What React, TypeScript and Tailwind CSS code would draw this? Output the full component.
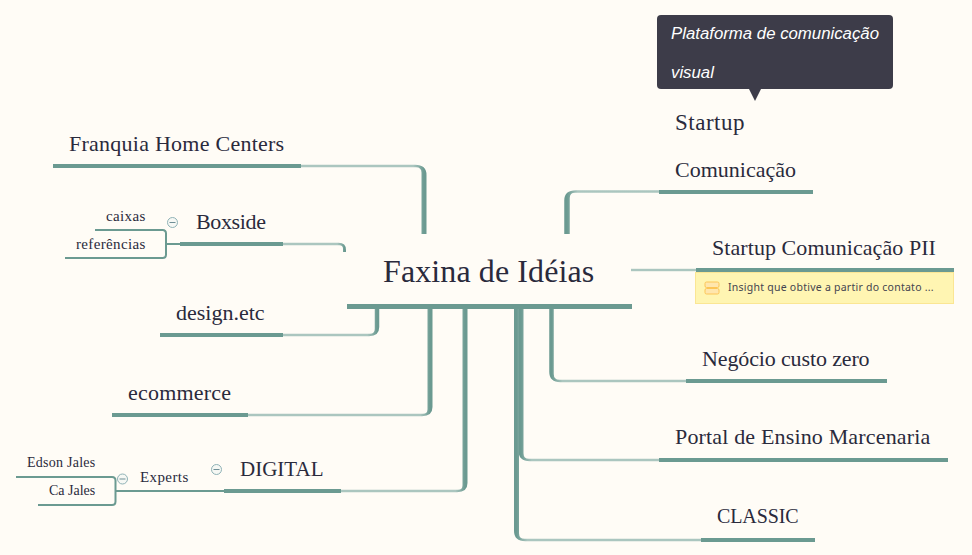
import React from 'react';

const teal = '#6b9a91';
const tealLight = '#abc6bf';

interface Elbow {
  id: string;
  xa: number;
  y: number;
  xb: number;
  yb: number;
  w: number;
  r: number;
}

// tapered branch: thin and light along the topic, thick and dark going into the root
const elbows: Elbow[] = [
  { id: 'franquia', xa: 301, y: 166, xb: 424, yb: 234, w: 5, r: 9 },
  { id: 'boxside', xa: 283, y: 244, xb: 344.5, yb: 252, w: 3, r: 6 },
  { id: 'design', xa: 283, y: 335, xb: 377, yb: 306, w: 4.5, r: 8 },
  { id: 'ecommerce', xa: 248, y: 415, xb: 430, yb: 306, w: 5, r: 8 },
  { id: 'digital', xa: 341, y: 491, xb: 465, yb: 306, w: 5, r: 8 },
  { id: 'comunicacao', xa: 659, y: 191.5, xb: 567, yb: 234, w: 5.5, r: 9 },
  { id: 'negocio', xa: 686, y: 381, xb: 551.5, yb: 306, w: 4.5, r: 9 },
  { id: 'portal', xa: 659, y: 460, xb: 521, yb: 306, w: 5, r: 9 },
  { id: 'classic', xa: 701, y: 540, xb: 516.5, yb: 306, w: 5, r: 9 },
];

function elbowPath({ xa, y, xb, yb, w, r }: Elbow) {
  const dx = xb > xa ? 1 : -1;
  const dy = yb > y ? 1 : -1;
  const t = 1.15;
  const h = w / 2;
  const ir = Math.max(r - h - 1, 1);
  return [
    `M${xa} ${y - dy * t}`,
    `L${xb - dx * r} ${y - dy * t}`,
    `Q${xb + dx * h} ${y - dy * t} ${xb + dx * h} ${y + dy * r}`,
    `L${xb + dx * h} ${yb}`,
    `L${xb - dx * h} ${yb}`,
    `L${xb - dx * h} ${y + dy * (t + ir)}`,
    `Q${xb - dx * h} ${y + dy * t} ${xb - dx * (h + ir)} ${y + dy * t}`,
    `L${xa} ${y + dy * t}`,
    'Z',
  ].join(' ');
}

function Connectors() {
  return (
    <svg className="absolute left-0 top-0" width="972" height="555" viewBox="0 0 972 555" fill="none">
      <defs>
        {elbows.map((e) => (
          <linearGradient key={e.id} id={e.id} gradientUnits="userSpaceOnUse" x1={e.xa} y1="0" x2={e.xb} y2="0">
            <stop offset="0" stopColor={tealLight} />
            <stop offset={1 - (e.r * 1.2) / Math.abs(e.xb - e.xa)} stopColor={tealLight} />
            <stop offset="1" stopColor={teal} />
          </linearGradient>
        ))}
      </defs>
      {elbows.map((e) => (
        <path key={e.id} d={elbowPath(e)} fill={`url(#${e.id})`} />
      ))}
      {/* straight branch to Startup Comunicação PII */}
      <rect x="631" y="268.8" width="65" height="2.4" fill={tealLight} />

      {/* sub topic brackets */}
      <path d="M95 230 H162.5 Q166 230 166 233.5 V254.5 Q166 258 162.5 258 H65" stroke={teal} strokeWidth="2" />
      <path d="M166 244 H181" stroke={teal} strokeWidth="2" />
      <path d="M16 477 H112 Q115.5 477 115.5 480.5 V501.5 Q115.5 505 112 505 H38" stroke={teal} strokeWidth="2" />
      <path d="M115.5 491 H225" stroke={teal} strokeWidth="2" />

      {/* collapse buttons */}
      {[
        [172.5, 222.5],
        [122.5, 479],
        [216.5, 469.5],
      ].map(([cx, cy]) => (
        <g key={cx} stroke="#8fb2b6" strokeWidth="1">
          <circle cx={cx} cy={cy} r="5" fill="#f6f8f4" />
          <path d={`M${cx - 3} ${cy} H${cx + 3}`} stroke="#6f8f96" />
        </g>
      ))}
    </svg>
  );
}

function Topic({ className, children }: { className: string; children: React.ReactNode }) {
  return (
    <div className={`absolute border-b-4 border-[#6b9a91] pb-[5px] whitespace-nowrap leading-[30px] ${className}`}>
      {children}
    </div>
  );
}

function SubTopic({ className, children }: { className: string; children: React.ReactNode }) {
  return <div className={`absolute whitespace-nowrap leading-[20px] ${className}`}>{children}</div>;
}

export default function App() {
  return (
    <div className="relative h-[555px] w-[972px] overflow-hidden bg-[#fffcf6] font-['Liberation_Serif',serif] text-[#2a2a3c]">
      <Connectors />

      <div className="absolute left-[347px] top-[251px] w-[285px] border-b-[5px] border-[#6b9a91] pb-[13px] pl-[36px] text-[32px] leading-[40px] tracking-[0.1px]">
        Faxina de Idéias
      </div>

      <Topic className="left-[53px] top-[129px] w-[248px] pl-[16px] text-[22px] tracking-[0.25px]">Franquia Home Centers</Topic>
      <Topic className="left-[180px] top-[207px] w-[103px] pl-[16px] text-[22px] tracking-[-0.35px]">Boxside</Topic>
      <Topic className="left-[160px] top-[298px] w-[123px] pl-[16px] text-[22px]">design.etc</Topic>
      <Topic className="left-[112px] top-[378px] w-[136px] pl-[16px] text-[22px] tracking-[0.2px]">ecommerce</Topic>
      <Topic className="left-[224px] top-[454px] w-[117px] pl-[16px] text-[21px]">DIGITAL</Topic>

      <Topic className="left-[659px] top-[108px] w-[154px] pl-[16px] text-[22px]">
        <div className="mb-[17px] text-[23px] tracking-[0.5px]">Startup</div>
        <div>Comunicação</div>
      </Topic>
      <Topic className="left-[696px] top-[233px] w-[258px] pl-[16px] text-[22px] tracking-[0.07px]">Startup Comunicação PII</Topic>
      <Topic className="left-[686px] top-[344px] w-[201px] pl-[16px] text-[22px] tracking-[-0.13px]">Negócio custo zero</Topic>
      <Topic className="left-[659px] top-[423px] w-[289px] pl-[16px] text-[22px] tracking-[0.16px]">
        <div className="-mt-px mb-px">Portal de Ensino Marcenaria</div>
      </Topic>
      <Topic className="left-[701px] top-[503px] w-[114px] pl-[16px] text-[20px] tracking-[-0.1px]">
        <div className="-mt-[2px] mb-[2px]">CLASSIC</div>
      </Topic>

      <SubTopic className="left-[106px] top-[206px] text-[15px] tracking-[0.35px]">caixas</SubTopic>
      <SubTopic className="left-[76px] top-[234px] text-[15px] tracking-[0.35px]">referências</SubTopic>
      <SubTopic className="left-[140px] top-[467px] text-[15px] tracking-[0.4px]">Experts</SubTopic>
      <SubTopic className="left-[27px] top-[453px] text-[14px] tracking-[0.25px]">Edson Jales</SubTopic>
      <SubTopic className="left-[49px] top-[481px] text-[14px]">Ca Jales</SubTopic>

      {/* note under Startup Comunicação PII */}
      <div className="absolute left-[695px] top-[272px] flex h-[32px] w-[259px] items-center gap-[9px] border border-[#fbe694] bg-[#fff5b2] pl-[8px] font-['Noto_Sans',sans-serif] text-[10.5px] tracking-[0.25px] text-[#44444f]">
        <svg width="16" height="14" viewBox="0 0 16 14" fill="none">
          <rect x="1" y="1" width="14" height="5.5" rx="1.5" fill="#ffe6ad" stroke="#fcc556" />
          <rect x="1" y="7.5" width="14" height="5.5" rx="1.5" fill="#ffe6ad" stroke="#fcc556" />
        </svg>
        <span className="-ml-px whitespace-nowrap">Insight que obtive a partir do contato ...</span>
      </div>

      {/* tooltip */}
      <div className="absolute left-[657px] top-[15px] h-[74px] w-[236px] rounded-[4px] bg-[#3d3c49] pl-[14px] font-['Liberation_Sans',sans-serif] text-[16.8px] italic leading-[39px] text-white">
        <div className="-mt-px">
          Plataforma de comunicação
          <br />
          visual
        </div>
        <div className="absolute left-[92px] top-[74px] h-0 w-0 border-x-[6px] border-t-[12px] border-x-transparent border-t-[#3d3c49]" />
      </div>
    </div>
  );
}
